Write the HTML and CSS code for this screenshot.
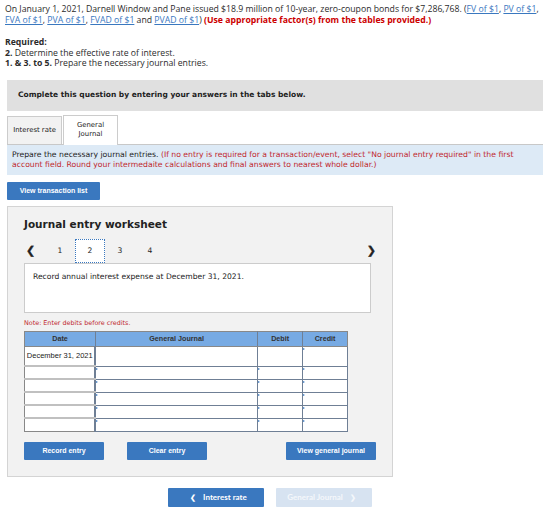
FILE: index.html
```html
<!DOCTYPE html>
<html lang="en">
<head>
  <meta charset="UTF-8">
  <title>Journal entry worksheet</title>
  <link rel="stylesheet" href="styles.css">
</head>
<body>
  <div class="question">
    <p class="intro">On January 1, 2021, Darnell Window and Pane issued $18.9 million of 10-year, zero-coupon bonds for $7,286,768. (<a href="#">FV of $1</a>, <a href="#">PV of $1</a>,
      <a href="#">FVA of $1</a>, <a href="#">PVA of $1</a>, <a href="#">FVAD of $1</a> and <a href="#">PVAD of $1</a>) <span class="warn">(Use appropriate factor(s) from the tables provided.)</span></p>

    <div class="required">
      <strong>Required:</strong><br>
      <b>2.</b> Determine the effective rate of interest.<br>
      <b>1. &amp; 3. to 5.</b> Prepare the necessary journal entries.
    </div>
  </div>

  <div class="instructions">Complete this question by entering your answers in the tabs below.</div>

  <!-- tabs -->
  <div class="tabs">
    <div class="tab">Interest rate</div>
    <div class="tab active">General<br>Journal</div>
  </div>

  <div class="info">
    <p>Prepare the necessary journal entries. <span class="warn-v">(If no entry is required for a transaction/event, select "No journal entry required" in the first</span></p>
    <p class="warn-v">account field. Round your intermedaite calculations and final answers to nearest whole dollar.)</p>
  </div>

  <button class="btn btn-list">View transaction list</button>

  <!-- worksheet -->
  <div class="worksheet">
    <h2>Journal entry worksheet</h2>

    <div class="steps">
      <span class="arrow">&#x276E;</span>
      <span class="step">1</span>
      <span class="step current">2</span>
      <span class="step">3</span>
      <span class="step">4</span>
      <span class="arrow next">&#x276F;</span>
    </div>

    <div class="desc">Record annual interest expense at December 31, 2021.</div>

    <p class="note">Note: Enter debits before credits.</p>

    <table class="journal">
      <thead>
        <tr>
          <th class="c-date">Date</th>
          <th class="c-acct">General Journal</th>
          <th class="c-amt">Debit</th>
          <th class="c-amt">Credit</th>
        </tr>
      </thead>
      <tbody>
        <tr class="first">
          <td class="date">December 31, 2021</td>
          <td class="cell"></td>
          <td class="cell"></td>
          <td class="cell mark"></td>
        </tr>
        <tr><td class="date"></td><td class="cell mark"></td><td class="cell mark"></td><td class="cell mark"></td></tr>
        <tr><td class="date"></td><td class="cell mark"></td><td class="cell mark"></td><td class="cell mark"></td></tr>
        <tr><td class="date"></td><td class="cell mark"></td><td class="cell mark"></td><td class="cell mark"></td></tr>
        <tr><td class="date"></td><td class="cell mark"></td><td class="cell mark"></td><td class="cell mark"></td></tr>
        <tr><td class="date"></td><td class="cell mark"></td><td class="cell mark"></td><td class="cell mark"></td></tr>
      </tbody>
    </table>

    <div class="actions">
      <button class="btn btn-wide">Record entry</button>
      <button class="btn btn-wide">Clear entry</button>
      <span class="spacer"></span>
      <button class="btn btn-gj">View general journal</button>
    </div>
  </div>

  <div class="pager">
    <button class="btn btn-page"><span class="chev">&#x276E;</span> Interest rate</button>
    <button class="btn btn-page disabled">General Journal <span class="chev">&#x276F;</span></button>
  </div>
</body>
</html>
```

FILE: styles.css
```css
* {
  box-sizing: border-box;
  margin: 0;
  padding: 0;
}

body {
  width: 560px;
  padding: 4px 7px 0 7px;
  font-family: "Open Sans", Arial, sans-serif;
  color: #333;
  background: #fff;
}

/* Texto do enunciado */
.question {
  margin-left: -2px;
  font-size: 8.7px;
  color: #2b2b2b;
}

.intro {
  line-height: 11px;
  height: 22px;
}

.intro a {
  color: #3a78bf;
  text-decoration: underline;
}

.warn {
  color: #c00;
  font-weight: bold;
}

.required {
  margin-top: 11px;
  line-height: 10.5px;
}

.required strong,
.required b {
  font-weight: bold;
}

.instructions {
  margin-top: 11px;
  width: 536px;
  height: 31px;
  background: #e0e0e0;
  font-family: "DejaVu Sans", Verdana, sans-serif;
  font-size: 7.5px;
  font-weight: bold;
  color: #222;
  padding: 10px 0 0 11px;
}

/* Abas */
.tabs {
  display: flex;
  align-items: flex-end;
  margin-top: 3px;
  height: 30px;
  width: 536px;
  font-family: "DejaVu Sans", Verdana, sans-serif;
  font-size: 6.9px;
  color: #222;
}

.tab {
  height: 28px;
  width: 55px;
  border: 1px solid #ccc;
  border-bottom: none;
  background: #f2f2f2;
  display: flex;
  align-items: center;
  justify-content: center;
  text-align: center;
}

.tab.active {
  width: 55px;
  height: 30px;
  margin-left: 1px;
  background: #fff;
  margin-bottom: -1px;
  position: relative;
  z-index: 1;
  line-height: 9px;
}

.info {
  width: 536px;
  height: 31px;
  background: #ddeaf6;
  border-top: 1px solid #c8c8c8;
  font-family: "DejaVu Sans", Verdana, sans-serif;
  font-size: 7.7px;
  line-height: 10px;
  color: #222;
  padding: 5px 5px 0 5px;
  white-space: nowrap;
}

.warn-v {
  color: #c0262d;
}

/* Botões */
.btn {
  border: none;
  background: #3a78bf;
  color: #fff;
  font-family: "Liberation Sans", Arial, sans-serif;
  font-size: 7px;
  font-weight: bold;
  border-radius: 1px;
  cursor: pointer;
}

.btn-list {
  display: block;
  margin-top: 7px;
  width: 93px;
  height: 18px;
}

/* Folha de lançamento */
.worksheet {
  margin-top: 6px;
  width: 386px;
  height: 271px;
  background: #f2f2f2;
  border: 1px solid #d4d4d4;
  padding: 10px 0 0 16px;
  font-family: "DejaVu Sans", Verdana, sans-serif;
}

.worksheet h2 {
  font-size: 10.5px;
  font-weight: bold;
  color: #222;
  height: 14px;
  line-height: 14px;
}

.steps {
  display: flex;
  align-items: center;
  margin-top: 8px;
  height: 24px;
  width: 354px;
  font-size: 7.6px;
  color: #222;
}

.arrow {
  font-size: 11px;
  font-weight: bold;
  width: 21px;
  padding-left: 2px;
  -webkit-text-stroke: 0.4px #222;
}

.arrow.next {
  margin-left: auto;
  width: auto;
  padding-left: 0;
  padding-right: 2px;
}

.step {
  width: 30px;
  height: 24px;
  line-height: 24px;
  text-align: center;
}

.step.current {
  background: #fff;
  border: 1px dotted #3a78bf;
  line-height: 22px;
}

.desc {
  width: 347px;
  height: 50px;
  background: #fff;
  border: 1px solid #ccc;
  font-size: 7.6px;
  color: #222;
  padding: 8px 0 0 8px;
}

.note {
  margin-top: 6px;
  font-size: 6.4px;
  color: #c0262d;
  height: 8px;
}

/* Tabela */
.journal {
  margin-top: 4px;
  border-collapse: collapse;
  width: 324px;
  font-family: "Liberation Sans", Arial, sans-serif;
  font-size: 7.5px;
  color: #222;
  border: 1px solid #888;
}

.journal th {
  background: #77aae3;
  height: 15px;
  font-size: 7.2px;
  font-weight: bold;
  color: #333;
  border-right: 1px solid #6f7f95;
  border-bottom: 1px solid #888;
}

.journal th:last-child {
  border-right: none;
}

.c-date { width: 71px; }
.c-acct { width: 163px; }
.c-amt { width: 45px; }

.journal td {
  height: 13px;
  background: #fff;
  padding: 0;
}

.journal tr.first td {
  height: 20px;
}

.journal td.date {
  border-bottom: 2px solid #c0c0c0;
  border-right: 2px solid #6f7f95;
  text-align: center;
  white-space: nowrap;
}

.journal td.cell {
  border: 1px solid #6f7f95;
  position: relative;
}

.journal td.cell.mark::before {
  content: "";
  position: absolute;
  left: 0;
  top: 1px;
  border-left: 2px solid #3a78bf;
  border-top: 1.5px solid transparent;
  border-bottom: 1.5px solid transparent;
}

.journal tr:last-child td.date {
  border-bottom: none;
}

.actions {
  display: flex;
  margin-top: 10px;
  width: 352px;
  gap: 23px;
}

.btn-wide {
  width: 80px;
  height: 18px;
}

.spacer {
  flex: 1;
}

.btn-gj {
  width: 90px;
  height: 18px;
}

/* Navegação inferior */
.pager {
  display: flex;
  gap: 12px;
  margin-top: 11px;
  padding-left: 161px;
}

.btn-page {
  width: 96px;
  height: 19px;
  font-family: "Lato", Arial, sans-serif;
  font-size: 8px;
}

.btn-page.disabled {
  background: #d7e3f1;
  color: #f4f7fb;
}

.chev {
  font-size: 7px;
  margin: 0 5px;
}
```
